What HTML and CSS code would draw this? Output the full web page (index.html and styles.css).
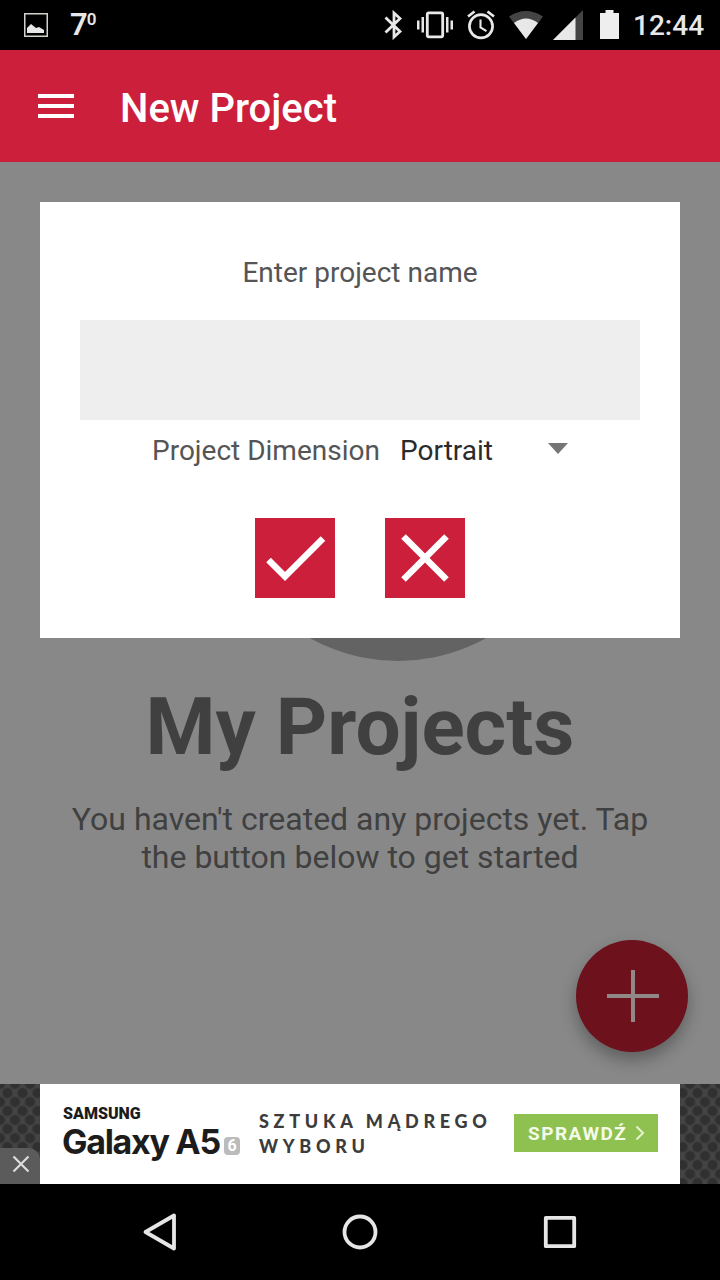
FILE: index.html
```html
<!DOCTYPE html>
<html lang="en">
<head>
  <meta charset="UTF-8" />
  <meta name="viewport" content="width=device-width, initial-scale=1.0" />
  <title>New Project</title>
  <link rel="stylesheet" href="styles.css">
</head>
<body>
  <div class="status-bar">
    <svg class="icon-picture" width="24" height="24" viewBox="0 0 24 24">
      <rect x="0.75" y="0.75" width="22.5" height="22.5" fill="none" stroke="#d2d2cc" stroke-width="1.5" />
      <path d="M3 20v-5l4-4 5 4 3-1 5 3v3z" fill="#e8e8e8" />
    </svg>
    <span class="temperature">7<span class="degree">0</span></span>
    <div class="status-icons">
      <svg class="bluetooth" width="20" height="30" viewBox="0 0 20 30" fill="none" stroke="#e8e8e8" stroke-width="2.8">
        <path d="M2.5 7.5L17 21.5 11 27V3L17 8.5 2.5 22.5" />
      </svg>
      <svg class="vibrate" width="38" height="30" viewBox="0 0 38 30" fill="#e8e8e8">
        <rect x="11.3" y="2.8" width="15.4" height="24" rx="1.5" fill="none" stroke="#e8e8e8" stroke-width="2.8" />
        <path d="M1 10.5h2.5v9H1zM5.500 7h2.500v15.500H5.500zM30 7h2.500v15.500H30zM34.500 10.500H37v9h-2.500z" />
      </svg>
      <svg class="alarm" width="30" height="30" viewBox="0 0 30 30" fill="none" stroke="#e8e8e8">
        <circle cx="15" cy="16.3" r="11.6" stroke-width="2.7" />
        <path d="M2 6.5L8.5 1.5M28 6.5L21.5 1.5" stroke-width="2.7" />
        <path d="M14.5 9.5v8l6 3.6" stroke-width="2.1" />
      </svg>
      <svg class="wifi" width="36" height="30" viewBox="0 0 36 30">
        <path d="M1 6.500Q18-4.500 35 6.500L18 29z" fill="#444" />
        <path d="M6 13Q18 4 30 13L18 29z" fill="#e8e8e8" />
      </svg>
      <svg class="signal" width="30" height="30" viewBox="0 0 30 30">
        <path d="M0 30L30 0v30z" fill="#444" />
        <path d="M0 30L22.5 7.5V30z" fill="#e8e8e8" />
      </svg>
      <svg class="battery" width="20" height="30" viewBox="0 0 20 30">
        <path d="M0 3h5.500V0h8v3H19v26H0z" fill="#eee" />
      </svg>
      <span class="clock">12:44</span>
    </div>
  </div>

  <div class="navbar">
    <svg class="menu" width="38" height="26" viewBox="0 0 38 26">
      <path d="M1 3h36M1 13h36M1 23h36" stroke="white" stroke-width="4" />
    </svg>
    <h1>New Project</h1>
  </div>

  <div class="main">
    <div class="circle"></div>
    <h2>My Projects</h2>
    <p>You haven't created any projects yet. Tap the button below to get started</p>

    <div class="add-btn">
      <svg width="54" height="54" viewBox="0 0 54 54">
        <path d="M28 1v52M2 27h52" stroke="#918888" stroke-width="4" />
      </svg>
    </div>

    <div class="modal">
      <label>Enter project name</label>
      <div class="name-input"></div>
      <div class="dimension">
        <span>Project Dimension</span>
        <div class="select">
          <span>Portrait</span>
          <svg width="20" height="11" viewBox="0 0 20 11"><path d="M0 0h20L10 11z" fill="#757575" /></svg>
        </div>
      </div>
      <div class="actions">
        <button>
          <svg width="80" height="80" viewBox="0 0 80 80"><path d="M13.5 42L30 58.500 68 20.500" /></svg>
        </button>
        <button>
          <svg width="80" height="80" viewBox="0 0 80 80"><path d="M18.5 18.5l43 43M61.5 18.5l-43 43" /></svg>
        </button>
      </div>
    </div>
  </div>

  <div class="ad">
    <div class="ad-content">
      <div class="brand">
        <span class="samsung">SAMSUNG</span>
        <div class="model"><span class="galaxy">Galaxy A5</span><span class="six">6</span></div>
      </div>
      <div class="slogan">SZTUKA MĄDREGO<br>WYBORU</div>
      <div class="check-it">
        <span>SPRAWDŹ</span>
        <svg width="10" height="16" viewBox="0 0 10 16"><path d="M1.500 1.500L8 8l-6.500 6.500" fill="none" stroke="#e6f2d0" stroke-width="2" /></svg>
      </div>
    </div>
    <div class="ad-close">
      <svg width="18" height="18" viewBox="0 0 18 18"><path d="M1.500 1.500l15 15M16.500 1.500l-15 15" stroke="#ddd" stroke-width="2.200" /></svg>
    </div>
  </div>

  <div class="bottom-nav">
    <svg width="40" height="40" viewBox="0 0 40 40"><path d="M5.5 20L34 3.5v33z" /></svg>
    <svg width="40" height="40" viewBox="0 0 40 40"><circle cx="20" cy="20" r="15.5" /></svg>
    <svg width="40" height="40" viewBox="0 0 40 40"><rect x="5.800" y="5.800" width="28.400" height="28.400" /></svg>
  </div>
</body>
</html>
```

FILE: styles.css
```css
* {
  box-sizing: border-box;
}

body {
  margin: 0;
  width: 720px;
  height: 1280px;
  display: flex;
  flex-direction: column;
  font-family: Roboto, sans-serif;
  background: black;
  overflow: hidden;
}

svg {
  display: block;
  flex-shrink: 0;
}

.status-bar {
  height: 50px;
  display: flex;
  align-items: center;
  padding: 0 16px 0 24px;
  color: #e8e8e8;
}

.temperature {
  display: flex;
  align-items: flex-start;
  margin-left: 22px;
  font-size: 31px;
  line-height: 30px;
  font-weight: 600;
}

.degree {
  font-size: 17px;
  line-height: 19px;
  font-weight: 600;
  margin-left: -1px;
}

.status-icons {
  display: flex;
  align-items: center;
  margin-left: auto;
}

.vibrate {
  margin-left: 13px;
}

.alarm,
.wifi {
  margin-left: 12px;
}

.signal {
  margin-left: 9px;
}

.battery {
  margin-left: 17px;
}

.clock {
  width: 71px;
  margin-left: 13px;
  font-size: 28px;
  font-weight: 500;
  line-height: 30px;
  padding-top: 2px;
  white-space: nowrap;
}

.navbar {
  height: 112px;
  display: flex;
  align-items: center;
  background-color: #cc1f3b;
  padding-left: 37px;
}

.navbar h1 {
  margin: 4px 0 0 45px;
  color: white;
  font-size: 40px;
  font-weight: 500;
}

.main {
  position: relative;
  height: 922px;
  background-color: #888;
  display: flex;
  flex-direction: column;
  align-items: center;
  padding-top: 139px;
  color: #404040;
  text-align: center;
}

.circle {
  width: 360px;
  height: 360px;
  margin-left: 75px;
  border-radius: 50%;
  background-color: #636363;
}

.main h2 {
  margin: 19px 0 0;
  font-size: 80px;
  line-height: 94px;
  font-weight: 700;
}

.main p {
  margin: 26px 0 0;
  width: 600px;
  font-size: 32px;
  line-height: 38px;
}

.add-btn {
  position: absolute;
  right: 32px;
  bottom: 32px;
  width: 112px;
  height: 112px;
  border-radius: 50%;
  background-color: #6d111d;
  box-shadow: 0 8px 16px rgba(0, 0, 0, 0.3);
  display: flex;
  align-items: center;
  justify-content: center;
}

.modal {
  position: absolute;
  top: 40px;
  left: 40px;
  right: 40px;
  height: 436px;
  padding: 54px 40px 40px;
  background: white;
  display: flex;
  flex-direction: column;
  align-items: center;
  font-size: 28px;
  line-height: 33px;
  color: #555;
}

.name-input {
  width: 100%;
  height: 100px;
  margin-top: 31px;
  background-color: #eee;
}

.dimension {
  display: flex;
  width: 416px;
  margin-top: 14px;
  justify-content: space-between;
  white-space: nowrap;
}

.select {
  width: 168px;
  display: flex;
  align-items: center;
  justify-content: space-between;
  color: #2b2b2b;
}

.select svg {
  margin-bottom: 4px;
}

.actions {
  display: flex;
  gap: 50px;
  margin-top: auto;
}

.actions button {
  width: 80px;
  height: 80px;
  padding: 0;
  border: none;
  background-color: #cc1f3b;
}

.actions path {
  fill: none;
  stroke: white;
  stroke-width: 6.5;
}

.ad {
  position: relative;
  height: 100px;
  padding: 0 40px;
  background-color: #444;
  background-image: radial-gradient(circle, #303030 4px, transparent 6px), radial-gradient(circle, #303030 4px, transparent 6px);
  background-size: 15px 18px;
  background-position: 0 0, 7.5px 9px;
}

.ad-content {
  height: 100px;
  background: white;
  display: flex;
  align-items: center;
  padding: 0 22px;
}

.brand {
  width: 197px;
  color: #1c1c1c;
  white-space: nowrap;
}

.samsung {
  display: block;
  margin-left: 1px;
  font-size: 16px;
  line-height: 16px;
  font-weight: 900;
}

.model {
  display: flex;
  align-items: center;
}

.galaxy {
  font-family: Inter, sans-serif;
  font-size: 34px;
  line-height: 40px;
  font-weight: 700;
  letter-spacing: -1.3px;
  width: 162px;
}

.six {
  width: 16px;
  height: 18px;
  margin-top: 7px;
  border-radius: 4px;
  background-color: #bbb;
  color: white;
  font-size: 16px;
  line-height: 18px;
  font-weight: 700;
  text-align: center;
}

.slogan {
  width: 255px;
  font-family: Lato, sans-serif;
  font-size: 18px;
  line-height: 25px;
  font-weight: 900;
  letter-spacing: 4.7px;
  color: #3c3c3c;
  white-space: nowrap;
}

.check-it {
  width: 144px;
  height: 38px;
  margin-bottom: 2px;
  background-color: #8fc150;
  display: flex;
  align-items: center;
  justify-content: space-between;
  padding: 0 13px 0 14px;
  color: #f4faea;
  font-size: 19px;
  font-weight: 700;
  letter-spacing: 1.5px;
}

.ad-close {
  position: absolute;
  left: 0;
  bottom: 0;
  width: 40px;
  height: 36px;
  border-top-right-radius: 12px;
  background-color: #5b5b5b;
  display: flex;
  align-items: center;
  justify-content: center;
  padding: 0 0 4px 1px;
}

.bottom-nav {
  height: 96px;
  display: flex;
  align-items: center;
  justify-content: space-between;
  padding: 0 140px;
}

.bottom-nav svg {
  fill: none;
  stroke: #e6e6e6;
  stroke-width: 3.8;
  stroke-linejoin: round;
}
```
